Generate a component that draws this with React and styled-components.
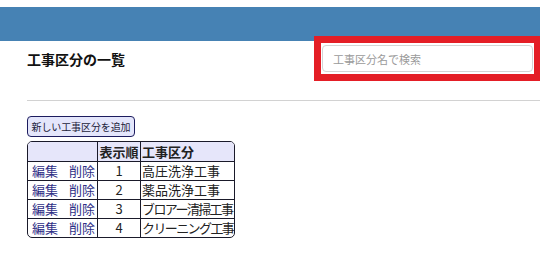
import styled, { createGlobalStyle } from "styled-components";

const rows = [
  { order: 1, name: "高圧洗浄工事" },
  { order: 2, name: "薬品洗浄工事" },
  { order: 3, name: "ブロアー清掃工事", tight: true },
  { order: 4, name: "クリーニング工事", tight: true },
];

function App() {
  return (
    <>
      <GlobalStyle />
      <TopBar />
      <TitleRow>
        <Title>工事区分の一覧</Title>
        <SearchWrap>
          <SearchInput placeholder="工事区分名で検索" />
        </SearchWrap>
      </TitleRow>
      <Rule />
      <Body>
        <AddButton>新しい工事区分を追加</AddButton>
        <Table>
          <colgroup>
            <col style={{ width: 69 }} />
            <col style={{ width: 43 }} />
            <col style={{ width: 94 }} />
          </colgroup>
          <thead>
            <tr>
              <Th></Th>
              <Th>表示順</Th>
              <Th $left>工事区分</Th>
            </tr>
          </thead>
          <tbody>
            {rows.map((r) => (
              <tr key={r.order}>
                <ActionCell>
                  <LinkText>編集</LinkText>
                  <LinkText>削除</LinkText>
                </ActionCell>
                <Td $center>{r.order}</Td>
                <NameCell $tight={r.tight}>{r.name}</NameCell>
              </tr>
            ))}
          </tbody>
        </Table>
      </Body>
    </>
  );
}
export default App;

const GlobalStyle = createGlobalStyle`
  html, body {
    margin: 0;
    padding: 0;
    background: #fff;
    overflow: hidden;
  }
  body {
    font-family: "Noto Sans CJK JP", "Noto Sans", sans-serif;
    color: #222;
  }
`;
const TopBar = styled.div`
  margin-top: 7px;
  height: 34px;
  background: #4682b4;
`;
const TitleRow = styled.div`
  display: flex;
  align-items: center;
  justify-content: space-between;
  padding: 2px 6px 0 27px;
`;
const Title = styled.h1`
  margin: 0;
  font-size: 14px;
  font-weight: 700;
  color: #111;
`;
const SearchWrap = styled.div`
  padding: 2px 1px;
  outline: 7px solid #e41e26;
  position: relative;
`;
const SearchInput = styled.input`
  display: block;
  box-sizing: border-box;
  width: 211px;
  height: 27px;
  border: 1px solid #d4d4d4;
  border-radius: 4px;
  padding: 0 10px;
  font-family: inherit;
  font-size: 11px;
  outline: none;
  &::placeholder {
    color: #9a9a9a;
  }
`;
const Rule = styled.div`
  margin: 26px 0 0 27px;
  border-top: 1px solid #d2d2d2;
`;
const Body = styled.div`
  padding: 15px 0 0 27px;
`;
const AddButton = styled.button`
  display: block;
  box-sizing: border-box;
  width: 108px;
  height: 21px;
  padding: 0;
  border: 1px solid #1c1c5e;
  border-radius: 4px;
  background: #e4e6fb;
  color: #1c1c3a;
  font-family: inherit;
  font-size: 10px;
  letter-spacing: -0.1px;
  white-space: nowrap;
`;
const Table = styled.table`
  margin-top: 4px;
  border-collapse: separate;
  border-spacing: 0;
  table-layout: fixed;
  width: 207px;
  border: 1px solid #1a1a2a;
  border-radius: 5px;
  font-size: 13px;
  th + th,
  td + td {
    border-left: 1px solid #1a1a2a;
  }
  tbody td {
    border-top: 1px solid #1a1a2a;
  }
`;
const Th = styled.th`
  height: 19px;
  padding: 0 1px;
  background: #e6e6fa;
  font-weight: 700;
  text-align: ${(p) => (p.$left ? "left" : "center")};
  white-space: nowrap;
  line-height: 19px;
  &:first-child {
    border-top-left-radius: 4px;
  }
  &:last-child {
    border-top-right-radius: 4px;
  }
`;
const Td = styled.td`
  height: 18px;
  padding: 0 1px;
  line-height: 18px;
  white-space: nowrap;
  text-align: ${(p) => (p.$center ? "center" : "left")};
`;
const NameCell = styled(Td)`
  letter-spacing: ${(p) => (p.$tight ? "-1.6px" : "0")};
`;
const ActionCell = styled(Td)`
  padding: 0 0 0 4px;
`;
const LinkText = styled.a`
  color: #2e2e86;
  cursor: pointer;
  & + & {
    margin-left: 11px;
  }
`;
